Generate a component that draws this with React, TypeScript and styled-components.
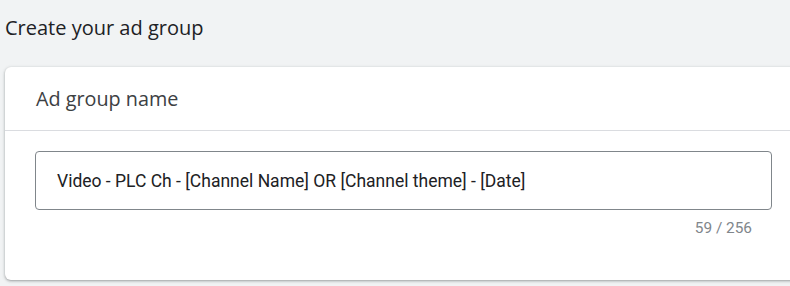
import React from "react";
import styled, { createGlobalStyle } from "styled-components";

const Global = createGlobalStyle`
  html, body { margin: 0; padding: 0; background: #f1f3f4; }
  body { width: 790px; height: 286px; overflow: hidden; }
`;

const Page = styled.div`
  display: flex;
  flex-direction: column;
  padding: 0 0 0 5px;
  width: 797px;
`;

const PageTitle = styled.h1`
  margin: 0;
  padding: 14px 0 0 0;
  height: 52px;
  box-sizing: border-box;
  font-family: "Open Sans", sans-serif;
  font-size: 20px;
  line-height: 28px;
  font-weight: 400;
  color: #202124;
`;

const Card = styled.section`
  background: #fff;
  border-radius: 6px 0 0 6px;
  box-shadow: 0 1px 2px rgba(60, 64, 67, 0.3), 0 1px 3px 1px rgba(60, 64, 67, 0.15);
  display: flex;
  flex-direction: column;
  margin-top: 15px;
  height: 213px;
`;

const CardHeader = styled.div`
  height: 64px;
  box-sizing: border-box;
  display: flex;
  align-items: center;
  padding: 0 0 1px 31px;
  border-bottom: 1px solid #dadce0;
  font-family: "Open Sans", sans-serif;
  font-size: 19.8px;
  color: #3c4043;
`;

const CardBody = styled.div`
  padding: 20px 30px 0 30px;
  display: flex;
  flex-direction: column;
`;

const Field = styled.div`
  height: 59px;
  box-sizing: border-box;
  border: 1px solid #80868b;
  border-radius: 4px;
  display: flex;
  align-items: center;
  padding: 0 0 0 21px;
  font-family: Roboto, sans-serif;
  font-size: 17.5px;
  color: #202124;
`;

const Counter = styled.div`
  align-self: flex-end;
  margin: 9px 20px 0 0;
  font-family: Roboto, sans-serif;
  font-size: 15.4px;
  color: #80868b;
`;

export default function App() {
  return (
    <>
      <Global />
      <Page>
        <PageTitle>Create your ad group</PageTitle>
        <Card>
          <CardHeader>Ad group name</CardHeader>
          <CardBody>
            <Field>Video - PLC Ch - [Channel Name] OR [Channel theme] - [Date]</Field>
            <Counter>59 / 256</Counter>
          </CardBody>
        </Card>
      </Page>
    </>
  );
}
